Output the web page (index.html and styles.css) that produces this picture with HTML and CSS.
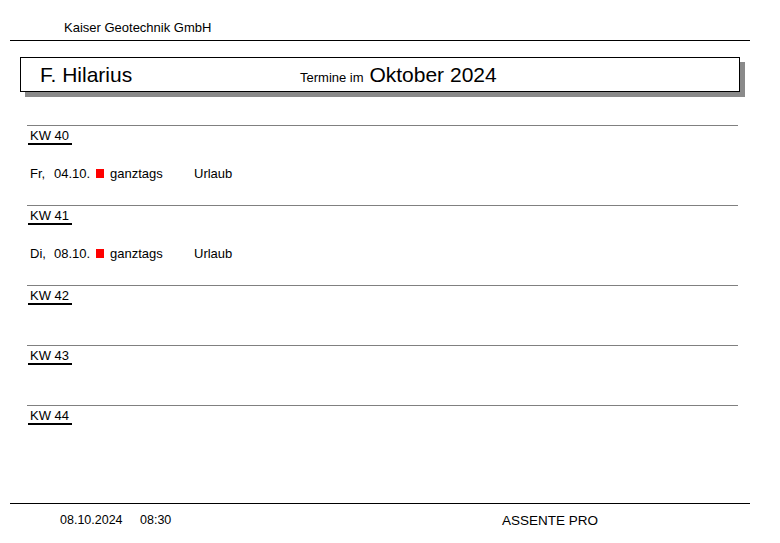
FILE: index.html
```html
<!DOCTYPE html>
<html lang="de">
<head>
<meta charset="utf-8">
<title>Termine im Oktober 2024</title>
<link rel="stylesheet" href="styles.css">
</head>
<body>
<div class="page">
  <header class="company">Kaiser Geotechnik GmbH</header>
  <main class="main">
    <div class="title-box">
      <span class="person">F. Hilarius</span>
      <span class="month"><span class="month-label">Termine im</span> Oktober 2024</span>
    </div>
    <div class="weeks">
      <section class="week">
        <div class="week-label">KW 40</div>
        <div class="entries">
          <div class="entry">
            <span class="day">Fr,</span><span class="date">04.10.</span><span class="marker"><span class="square"></span></span><span class="time">ganztags</span><span class="text">Urlaub</span>
          </div>
        </div>
      </section>
      <section class="week">
        <div class="week-label">KW 41</div>
        <div class="entries">
          <div class="entry">
            <span class="day">Di,</span><span class="date">08.10.</span><span class="marker"><span class="square"></span></span><span class="time">ganztags</span><span class="text">Urlaub</span>
          </div>
        </div>
      </section>
      <section class="week">
        <div class="week-label">KW 42</div>
      </section>
      <section class="week">
        <div class="week-label">KW 43</div>
      </section>
      <section class="week">
        <div class="week-label">KW 44</div>
      </section>
    </div>
  </main>
  <footer class="footer">
    <span class="f-date">08.10.2024</span>
    <span class="f-time">08:30</span>
    <span class="f-brand">ASSENTE PRO</span>
  </footer>
</div>
</body>
</html>
```

FILE: styles.css
```css
html, body {
  margin: 0;
  padding: 0;
  background: #fff;
}
body {
  font-family: "Liberation Sans", Arial, sans-serif;
  color: #000;
}
.page {
  width: 740px;
  height: 543px;
  margin-left: 10px;
  display: flex;
  flex-direction: column;
}
.company {
  height: 41px;
  box-sizing: border-box;
  padding: 20px 0 0 54px;
  font-size: 13px;
  line-height: 16px;
  border-bottom: 1px solid #000;
}
.main {
  flex: 1;
}
.title-box {
  margin: 16px 0 0 10px;
  width: 720px;
  height: 35px;
  box-sizing: border-box;
  border: 1px solid #000;
  box-shadow: 5px 5px 0 #8a8a8a;
  display: flex;
  align-items: center;
  padding-left: 19px;
  background: #fff;
}
.person {
  font-size: 21px;
  width: 260px;
}
.month {
  font-size: 21px;
}
.month-label {
  font-size: 13px;
}
.weeks {
  margin: 33px 0 0 17px;
  width: 711px;
}
.week {
  border-top: 1px solid #808080;
  min-height: 60px;
  box-sizing: border-box;
}
.week-label {
  display: inline-block;
  margin-left: 1px;
  padding: 2px 3px 0 2px;
  font-size: 13px;
  line-height: 15px;
  border-bottom: 2px solid #000;
}
.entries {
  padding: 18px 0 22px;
}
.entry {
  display: flex;
  align-items: center;
  height: 20px;
  font-size: 13px;
  padding-left: 3px;
}
.day { width: 24px; }
.date { width: 42px; }
.marker {
  width: 14px;
  display: flex;
  align-items: center;
}
.square {
  width: 8px;
  height: 9px;
  background: #ff0000;
}
.time { width: 84px; }
.footer {
  height: 40px;
  box-sizing: border-box;
  border-top: 1px solid #000;
  display: flex;
  padding: 9px 0 0 50px;
  font-size: 12.5px;
  line-height: 15px;
}
.f-date { width: 80px; }
.f-time { width: 362px; }
.f-brand { font-size: 13.5px; }
```
